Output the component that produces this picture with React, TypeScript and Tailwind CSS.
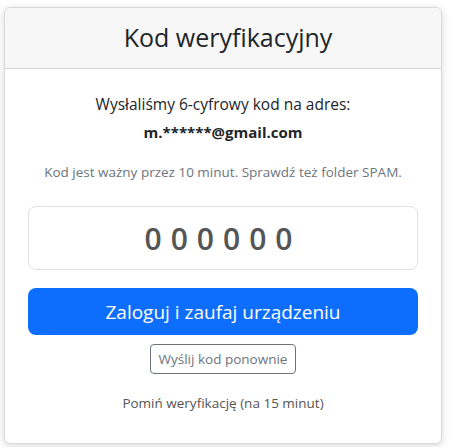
const App = () => {
    return (
        <div className="min-h-[447px] bg-white pt-[7px] pl-[4px] font-['Open_Sans',sans-serif]">
            <div className="w-[438px] rounded-[6px] border border-[#d9d9d9] bg-white shadow-[0_2px_8px_rgba(0,0,0,0.15)] overflow-hidden">
                <div className="h-[61px] bg-[#f7f7f7] border-b border-[#d4d4d4] flex items-center justify-center pl-[10px]">
                    <h1 className="text-[25px] text-[#212529]">Kod weryfikacyjny</h1>
                </div>
                <div className="px-[23px] pt-[23px] pb-[29px] flex flex-col items-center text-center">
                    <p className="text-[15.5px] text-[#212529] leading-[24px]">
                        Wysłaliśmy 6-cyfrowy kod na adres:
                    </p>
                    <p className="text-[15px] font-bold text-[#212529] leading-[24px] mt-[4px]">
                        m.******@gmail.com
                    </p>
                    <p className="text-[13.5px] text-[#6c757d] mt-[18px]">
                        Kod jest ważny przez 10 minut. Sprawdź też folder SPAM.
                    </p>
                    <div className="mt-[24px] w-full h-[64px] rounded-[8px] border border-[#dee2e6] flex items-center justify-center">
                        <span className="text-[30px] font-semibold text-[#555] tracking-[9px]">
                            000000
                        </span>
                    </div>
                    <button className="mt-[18px] w-full h-[47px] rounded-[8px] bg-[#0d6efd] text-white text-[19px]">
                        Zaloguj i zaufaj urządzeniu
                    </button>
                    <button className="mt-[9px] h-[30px] px-[8px] rounded-[4px] border border-[#6c757d] text-[#6c757d] text-[13.5px]">
                        Wyślij kod ponownie
                    </button>
                    <p className="mt-[19px] text-[13.5px] text-[#555]">
                        Pomiń weryfikację (na 15 minut)
                    </p>
                </div>
            </div>
        </div>
    );
};

export default App;
